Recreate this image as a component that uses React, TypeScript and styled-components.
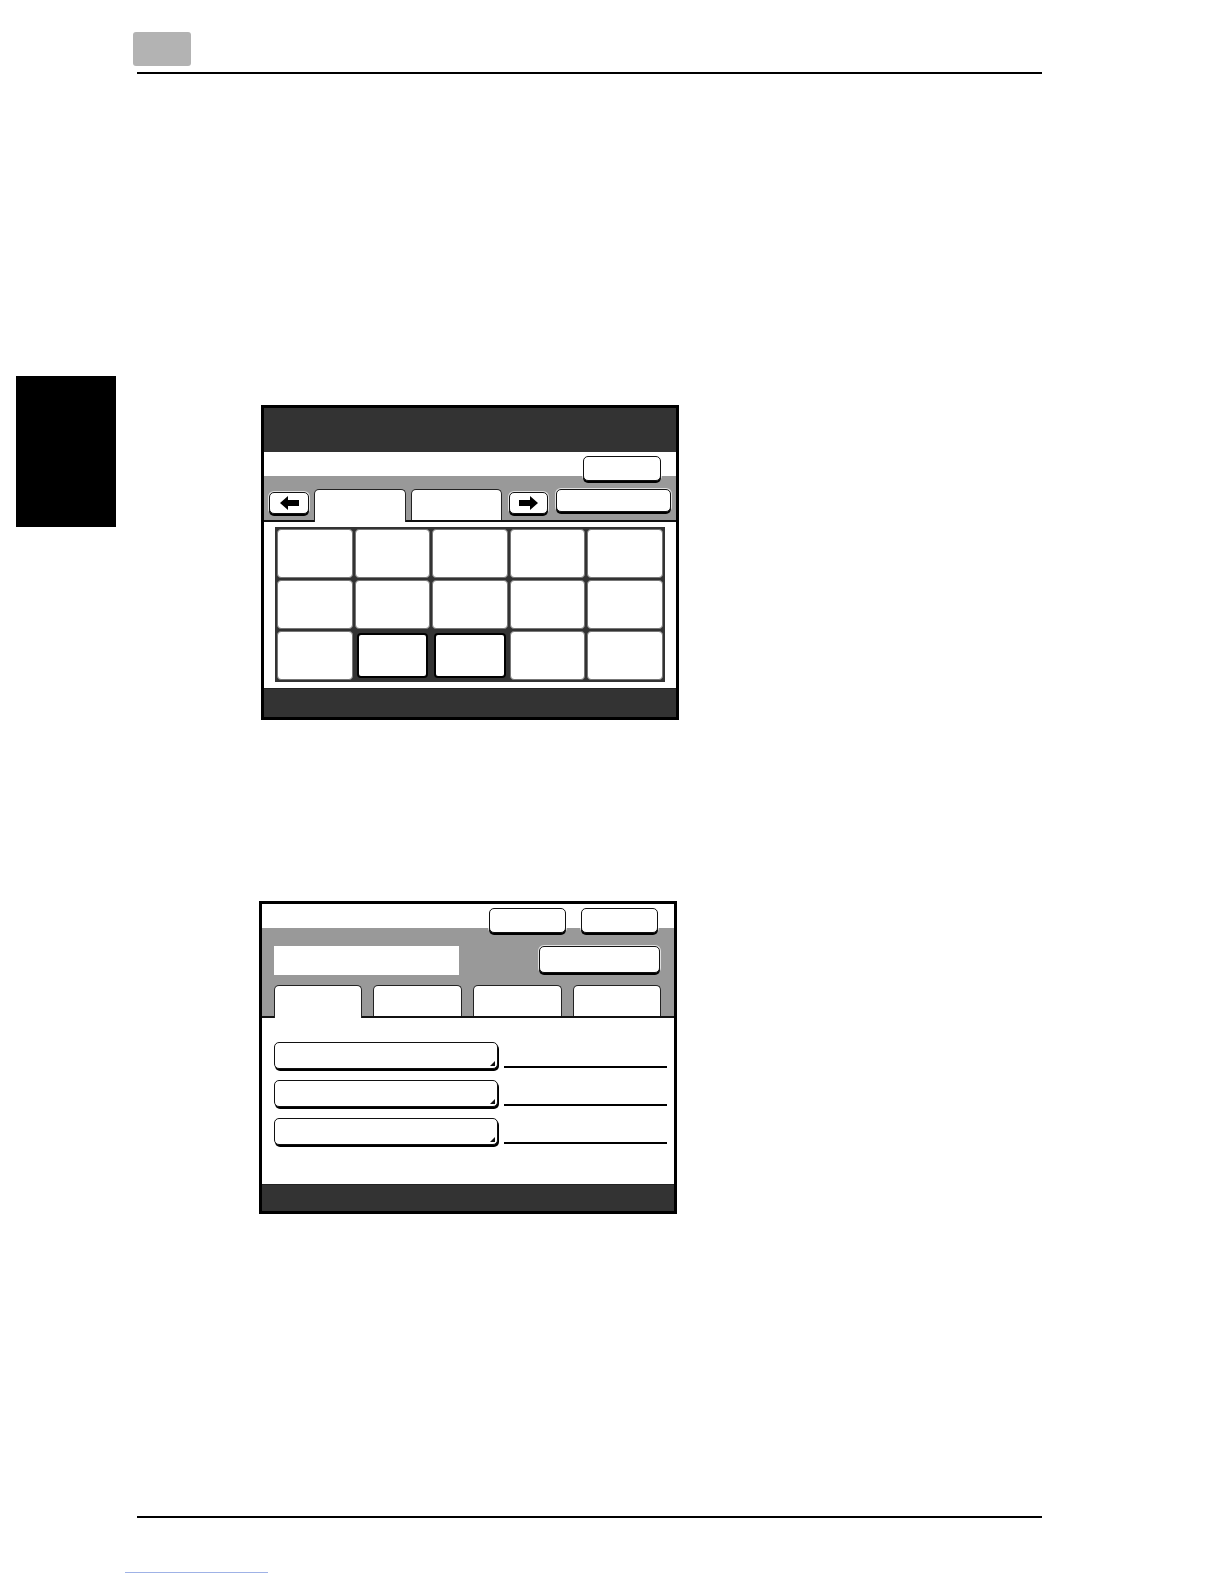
import { FunctionComponent } from 'react';
import styled, { createGlobalStyle } from 'styled-components';

const GlobalStyle = createGlobalStyle`
  html, body {
    margin: 0;
    padding: 0;
    background: #ffffff;
    font-family: "Liberation Sans", Arial, sans-serif;
  }
`;

const ArrowIcon: FunctionComponent<{ dir: 'left' | 'right' }> = ({ dir }) => (
  <svg width="19" height="14" viewBox="0 0 19 14">
    <polygon
      points={
        dir === 'left'
          ? '0,7 8,0 8,4 19,4 19,10 8,10 8,14'
          : '19,7 11,0 11,4 0,4 0,10 11,10 11,14'
      }
      fill="#000"
    />
  </svg>
);

const cells = Array.from({ length: 15 }, (_, i) => i);
const selectedCells = [11, 12];

const App: FunctionComponent = () => {
  return (
    <Page>
      <GlobalStyle />
      {/* Running header */}
      <Header>
        <ChapterBox />
      </Header>
      <Rule $top={6} />

      <Body>
        <SideTab />
        <Figures>
          {/* Screen 1: key grid */}
          <Screen>
            <TitleBar />
            <Band $white={24}>
              <BandRow $justify="flex-end" $pad="4px 15px 0 0">
                <Key $w={78} $h={25} />
              </BandRow>
              <TabRow $gap={0} $top={6} $left={5}>
                <ArrowKey $w={40}>
                  <ArrowIcon dir="left" />
                </ArrowKey>
                <Tab $w={92} $active $ml={5} />
                <Tab $w={91} $ml={5} />
                <ArrowKey $w={39} $ml={7}>
                  <ArrowIcon dir="right" />
                </ArrowKey>
                <Key $w={115} $h={23} $ml={8} $mb={6} />
              </TabRow>
            </Band>
            <Content>
              <Grid>
                {cells.map((c) => (
                  <Cell key={c} $selected={selectedCells.includes(c)} />
                ))}
              </Grid>
            </Content>
            <FooterBar $h={28} />
          </Screen>

          {/* Screen 2: settings with tabs */}
          <Screen $shift={-2}>
            <Band $white={24}>
              <BandRow $justify="flex-end" $pad="4px 16px 0 0" $gap={15}>
                <Key $w={77} $h={25} />
                <Key $w={77} $h={25} />
              </BandRow>
              <BandRow $justify="space-between" $pad="11px 14px 0 12px">
                <Field />
                <Key $w={121} $h={27} />
              </BandRow>
              <TabRow $gap={11} $top={10} $left={12}>
                <Tab $w={88} $active />
                <Tab $w={89} />
                <Tab $w={89} />
                <Tab $w={88} />
              </TabRow>
            </Band>
            <FormContent>
              {[0, 1, 2].map((r) => (
                <FormRow key={r}>
                  <DropKey />
                  <Underline />
                </FormRow>
              ))}
            </FormContent>
            <FooterBar $h={26} />
          </Screen>
        </Figures>
      </Body>

      <Rule $top={302} />
      <LinkLine />
    </Page>
  );
};

const Page = styled.div`
  width: 1224px;
  height: 1584px;
  overflow: hidden;
  background: #ffffff;
`;

const Header = styled.div`
  padding: 32px 0 0 133px;
`;

const ChapterBox = styled.div`
  width: 58px;
  height: 34px;
  background: #b3b3b3;
  border-radius: 3px;
`;

const Rule = styled.div<{ $top: number }>`
  margin: ${(p) => p.$top}px 0 0 137px;
  width: 905px;
  height: 2px;
  background: #000;
`;

const Body = styled.div`
  display: flex;
  margin-top: 302px;
`;

const SideTab = styled.div`
  margin-left: 16px;
  width: 100px;
  height: 151px;
  flex-shrink: 0;
  background: #000;
`;

const Figures = styled.div`
  display: flex;
  flex-direction: column;
  gap: 181px;
  margin-left: 145px;
  padding-top: 29px;
`;

const Screen = styled.div<{ $shift?: number }>`
  width: 418px;
  box-sizing: border-box;
  border: 3px solid #000;
  margin-left: ${(p) => p.$shift || 0}px;
  display: flex;
  flex-direction: column;
  background: #fff;
`;

const TitleBar = styled.div`
  height: 44px;
  background: #333333;
`;

const Band = styled.div<{ $white: number }>`
  display: flex;
  flex-direction: column;
  background: linear-gradient(
    #ffffff 0,
    #ffffff ${(p) => p.$white}px,
    #999999 ${(p) => p.$white}px
  );
`;

const BandRow = styled.div<{ $justify: string; $pad: string; $gap?: number }>`
  display: flex;
  justify-content: ${(p) => p.$justify};
  align-items: flex-start;
  gap: ${(p) => p.$gap || 0}px;
  padding: ${(p) => p.$pad};
`;

const TabRow = styled.div<{ $gap: number; $top: number; $left: number }>`
  display: flex;
  align-items: flex-end;
  gap: ${(p) => p.$gap}px;
  margin-top: ${(p) => p.$top}px;
  padding-left: ${(p) => p.$left}px;
`;

const Key = styled.div<{ $w: number; $h: number; $ml?: number; $mb?: number; $mt?: number }>`
  position: relative;
  z-index: 1;
  box-sizing: border-box;
  width: ${(p) => p.$w}px;
  height: ${(p) => p.$h}px;
  margin-left: ${(p) => p.$ml || 0}px;
  margin-bottom: ${(p) => (p.$mb || 0) + 2}px;
  margin-top: ${(p) => p.$mt || 0}px;
  background: #ffffff;
  border: 1.5px solid #111;
  border-radius: 5px;
  box-shadow: 0 2px 0 #000, 0 0 0 1px rgba(255, 255, 255, 0.7);
  flex-shrink: 0;
`;

const ArrowKey = styled(Key).attrs({ $h: 22, $mb: 4 })`
  display: flex;
  align-items: center;
  justify-content: center;
`;

const Tab = styled.div<{ $w: number; $h?: number; $active?: boolean; $ml?: number }>`
  position: relative;
  z-index: ${(p) => (p.$active ? 2 : 0)};
  box-sizing: border-box;
  width: ${(p) => p.$w}px;
  height: ${(p) => (p.$h || 31) + (p.$active ? 2 : 0)}px;
  margin-left: ${(p) => p.$ml || 0}px;
  margin-bottom: ${(p) => (p.$active ? -2 : 0)}px;
  background: #ffffff;
  border: 1.5px solid #222;
  border-bottom: none;
  border-radius: 5px 5px 0 0;
  flex-shrink: 0;
`;

const Content = styled.div`
  height: 168px;
  box-sizing: border-box;
  border-top: 2px solid #111;
  padding: 5px 11px 0 11px;
`;

const Grid = styled.div`
  display: grid;
  grid-template-columns: repeat(5, 1fr);
  grid-template-rows: repeat(3, 1fr);
  gap: 2px;
  padding: 2px;
  width: 390px;
  height: 155px;
  box-sizing: border-box;
  background: #333333;
`;

const Cell = styled.div<{ $selected?: boolean }>`
  background: #ffffff;
  border-radius: 4px;
  box-sizing: border-box;
  border: ${(p) => (p.$selected ? '2.5px solid #000' : '1px solid #777')};
  margin: ${(p) => (p.$selected ? '2px' : '0')};
`;

const FooterBar = styled.div<{ $h: number }>`
  height: ${(p) => p.$h}px;
  background: #333333;
  border-top: 1px solid #222;
`;

const Field = styled.div`
  width: 185px;
  height: 29px;
  background: #ffffff;
`;

const FormContent = styled.div`
  height: 168px;
  box-sizing: border-box;
  border-top: 2px solid #111;
  padding: 24px 0 0 12px;
  display: flex;
  flex-direction: column;
  gap: 9px;
`;

const FormRow = styled.div`
  display: flex;
  align-items: flex-end;
  gap: 6px;
`;

const DropKey = styled.div`
  position: relative;
  box-sizing: border-box;
  width: 224px;
  height: 27px;
  margin-bottom: 2px;
  background: #ffffff;
  border: 1.5px solid #111;
  border-radius: 5px;
  box-shadow: 1px 2px 0 #000;

  &::after {
    content: '';
    position: absolute;
    right: 2px;
    bottom: 2px;
    width: 0;
    height: 0;
    border-left: 5px solid transparent;
    border-bottom: 5px solid #111;
  }
`;

const Underline = styled.div`
  width: 163px;
  height: 2px;
  background: #000;
  margin-bottom: 3px;
`;

const LinkLine = styled.div`
  margin: 54px 0 0 125px;
  width: 143px;
  height: 1px;
  background: #9fb2e6;
`;

export default App;
